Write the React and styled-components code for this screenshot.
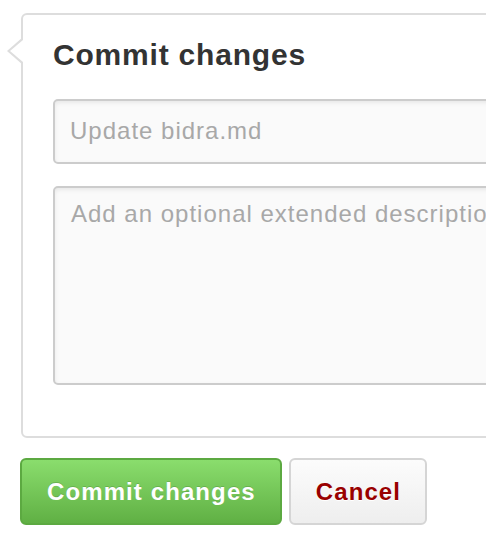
import React from 'react';
import styled, { createGlobalStyle } from 'styled-components';

const GlobalStyle = createGlobalStyle`
  html, body {
    margin: 0;
    padding: 0;
    background: #fff;
    overflow: hidden;
  }
  body {
    font-family: "Liberation Sans", Arial, Helvetica, sans-serif;
  }
`;

const Page = styled.div`
  padding: 13px 0 0 21px;
`;

const CommitBox = styled.div`
  position: relative;
  width: 620px;
  box-sizing: border-box;
  padding: 23px 30px 51px 30px;
  border: 2px solid #ddd;
  border-radius: 6px;
  background: #fff;

  /* speech-bubble arrow pointing left */
  &::before,
  &::after {
    content: '';
    position: absolute;
    width: 0;
    height: 0;
    border-style: solid;
    border-color: transparent;
  }
  &::before {
    left: -16px;
    top: 22px;
    border-width: 14px 16px 14px 0;
    border-right-color: #ddd;
  }
  &::after {
    left: -13px;
    top: 25px;
    border-width: 11px 13px 11px 0;
    border-right-color: #fff;
  }
`;

const Title = styled.h3`
  margin: 0 0 27px;
  font-size: 30px;
  line-height: 34px;
  font-weight: bold;
  letter-spacing: 0.8px;
  color: #333;
`;

const fieldStyle = `
  display: block;
  width: 100%;
  box-sizing: border-box;
  border: 2px solid #ccc;
  border-radius: 5px;
  background: #fafafa;
  box-shadow: inset 0 2px 4px rgba(0, 0, 0, 0.075);
  font-family: "Liberation Sans", Arial, Helvetica, sans-serif;
  font-size: 24px;
  line-height: 28px;
  letter-spacing: 1px;
  color: #333;
  outline: none;

  &::placeholder {
    color: #a8a8a8;
    opacity: 1;
  }
`;

const TitleInput = styled.input`
  ${fieldStyle}
  height: 65px;
  padding: 16px 15px 17px;
`;

const DescriptionArea = styled.textarea`
  ${fieldStyle}
  height: 199px;
  margin-top: 22px;
  padding: 12px 16px;
  resize: none;
`;

const Actions = styled.div`
  display: flex;
  gap: 7px;
  margin: 20px 0 0 -1px;
`;

const Button = styled.button`
  height: 67px;
  padding: 0 24px 0 25px;
  box-sizing: border-box;
  border-radius: 6px;
  font-family: "Liberation Sans", Arial, Helvetica, sans-serif;
  font-size: 24px;
  font-weight: bold;
  letter-spacing: 1.1px;
  cursor: pointer;
  border: 2px solid ${({ $primary }) => ($primary ? '#5ca941' : '#d5d5d5')};
  color: ${({ $primary }) => ($primary ? '#fff' : '#990000')};
  background: ${({ $primary }) =>
    $primary
      ? 'linear-gradient(#8add6d, #60b044)'
      : 'linear-gradient(#fcfcfc, #eeeeee)'};
  text-shadow: ${({ $primary }) =>
    $primary ? '0 -1px 0 rgba(0, 0, 0, 0.15)' : '0 1px 0 #fff'};
`;

const App = () => {
  return (
    <Page>
      <GlobalStyle />
      <CommitBox>
        <Title>Commit changes</Title>
        <TitleInput type="text" placeholder="Update bidra.md" />
        <DescriptionArea placeholder="Add an optional extended description..." />
      </CommitBox>
      <Actions>
        <Button $primary type="submit">Commit changes</Button>
        <Button type="button">Cancel</Button>
      </Actions>
    </Page>
  );
};

export default App;
